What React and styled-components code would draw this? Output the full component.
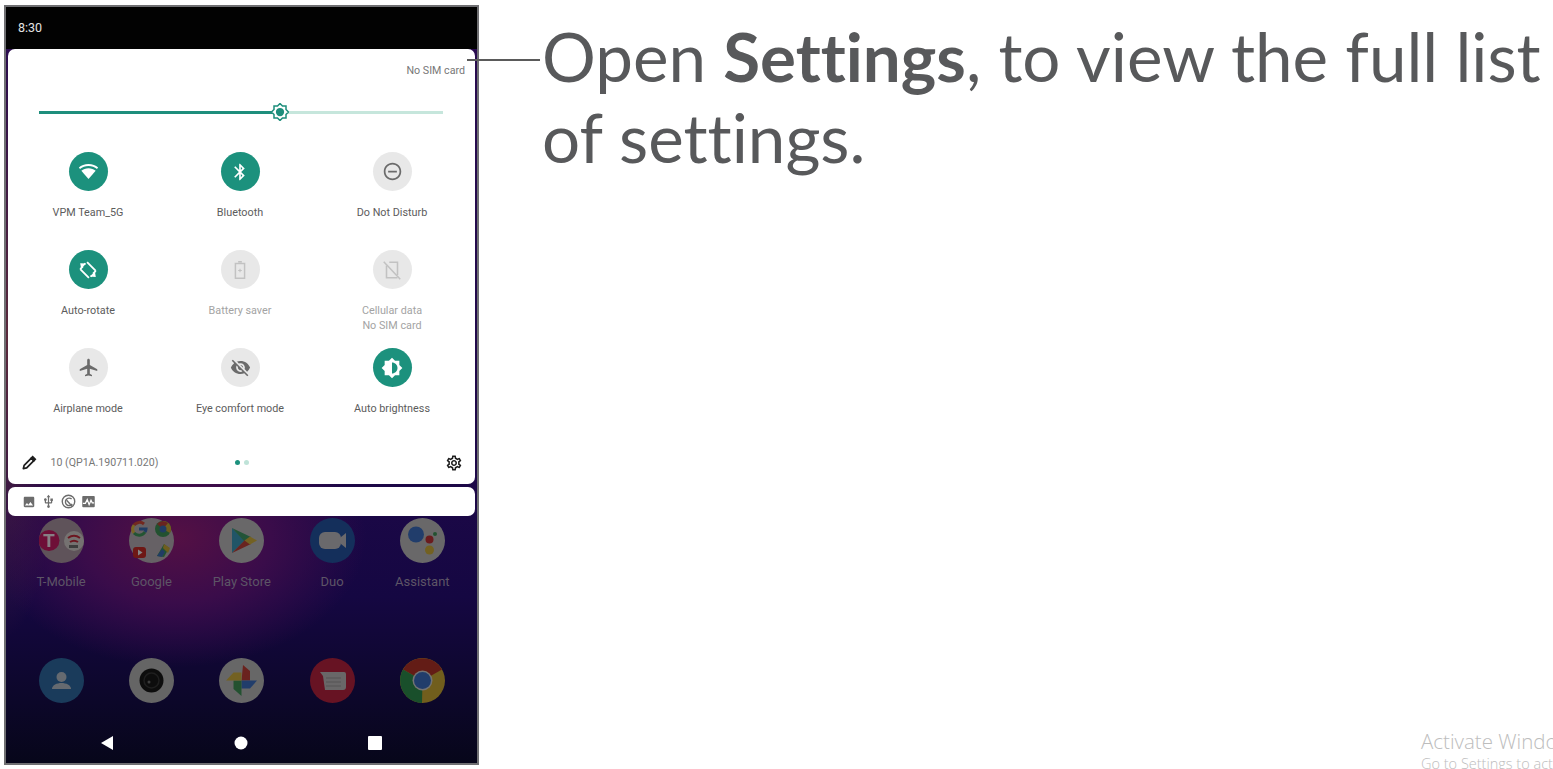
import React from "react"
import styled, { createGlobalStyle } from "styled-components"
import {
  MdBluetooth,
  MdOutlineDoNotDisturbOn,
  MdAirplanemodeActive,
  MdVisibilityOff,
  MdBrightnessMedium,
  MdOutlineSettings,
  MdImage,
  MdUsb,
} from "react-icons/md"

const GlobalStyle = createGlobalStyle`
  html, body {
    margin: 0;
    height: 100%;
    overflow: hidden;
    background: #fff;
  }
  * {
    box-sizing: border-box;
  }
`

const Page = styled.div`
  position: relative;
  width: 1553px;
  height: 769px;
  padding: 5px 0 0 4px;
  display: flex;
  gap: 63px;
  overflow: hidden;
`

const Phone = styled.div`
  width: 475px;
  height: 760px;
  flex: none;
  border: 2px solid #6f6f72;
  display: flex;
  flex-direction: column;
  background:
    radial-gradient(ellipse 190px 130px at 170px 530px, #541044 0%, #3a0c4a 50%, rgba(40, 8, 76, 0) 100%),
    radial-gradient(ellipse 60px 300px at 0 330px, #5c2a3c 0%, rgba(60, 20, 60, 0) 100%),
    linear-gradient(180deg, #2a0b50 0%, #1d0848 62%, #150742 78%, #0c0729 92%, #07061a 100%);
  font-family: Roboto, "Liberation Sans", sans-serif;
`

const StatusBar = styled.div`
  height: 42px;
  flex: none;
  background: #020202;
  color: #e4e4e4;
  font-size: 12.5px;
  padding: 13px 0 0 12px;
`

const Panel = styled.div`
  height: 435px;
  flex: none;
  margin: 0 2px 0 1.5px;
  border-radius: 7px;
  background: #fff;
  display: flex;
  flex-direction: column;
`

const SimText = styled.div`
  height: 44px;
  flex: none;
  padding: 15px 10px 0 0;
  text-align: right;
  font-size: 10.7px;
  color: #777;
`

const BrightnessRow = styled.div`
  position: relative;
  height: 38px;
  flex: none;
  margin: 0 32px 0 31px;
  display: flex;
  align-items: center;
`

const SliderFill = styled.div`
  height: 3px;
  background: ${(p) => (p.$on ? "#1e8e7c" : "#c6e6dc")};
  flex: ${(p) => (p.$on ? "0 0 241px" : "1")};
`

const SliderThumb = styled.svg`
  position: absolute;
  left: 232px;
  top: 10px;
  width: 18px;
  height: 18px;
`

const TileGrid = styled.div`
  margin: 21px 4px 0 4.5px;
  flex: none;
  display: grid;
  grid-template-columns: repeat(3, 152px);
  grid-template-rows: 98px 98px 92px;
`

const Tile = styled.div`
  display: flex;
  flex-direction: column;
  align-items: center;
`

const TileCircle = styled.div`
  width: 39px;
  height: 39px;
  border-radius: 50%;
  display: flex;
  align-items: center;
  justify-content: center;
  background: ${(p) => (p.$state === "on" ? "#1c917d" : "#e8e8e8")};
  color: ${(p) => (p.$state === "on" ? "#fff" : p.$state === "off" ? "#6b6b6b" : "#c2c2c2")};
`

const TileLabel = styled.div`
  margin-top: 13.5px;
  font-size: 10.8px;
  line-height: 15px;
  text-align: center;
  color: ${(p) => (p.$muted ? "#a3a3a3" : "#5c5c5c")};
`

const PanelFooter = styled.div`
  margin-top: auto;
  height: 44px;
  flex: none;
  padding: 1px 12px 0 13px;
  display: flex;
  align-items: center;
  color: #1d1d1d;
`

const BuildText = styled.div`
  margin-left: 14px;
  width: 184px;
  font-size: 10.6px;
  color: #777;
`

const PageDots = styled.div`
  display: flex;
  gap: 4px;
`

const Dot = styled.span`
  width: 5px;
  height: 5px;
  border-radius: 50%;
  background: ${(p) => (p.$active ? "#1c917d" : "#bfe3d8")};
`

const FooterGear = styled.div`
  margin-left: auto;
  display: flex;
  stroke: currentColor;
  stroke-width: 0.6;
`

const NotificationStrip = styled.div`
  height: 29px;
  flex: none;
  margin: 3px 2px 0 1.5px;
  padding: 0 0 0 14px;
  border-radius: 7px;
  background: #fff;
  display: flex;
  align-items: center;
  gap: 5px;
  color: #6c6c6c;
`

const Home = styled.div`
  flex: 1;
  display: flex;
  flex-direction: column;
  align-items: stretch;
`

const AppRow = styled.div`
  margin-top: ${(p) => p.$top}px;
  padding-left: 10px;
  display: grid;
  grid-template-columns: repeat(5, 90.3px);
`

const AppCell = styled.div`
  display: flex;
  flex-direction: column;
  align-items: center;
`

const AppIcon = styled.svg`
  width: 45px;
  height: 45px;
  display: block;
  filter: brightness(0.6) saturate(0.9);
`

const AppLabel = styled.div`
  margin-top: 11px;
  font-size: 13px;
  line-height: 16px;
  color: #5d5566;
`

const NavBar = styled.div`
  margin-top: auto;
  height: 40px;
  padding-left: 94px;
  display: flex;
  align-items: center;
`

const NavButton = styled.svg`
  width: 14px;
  height: 14px;
  margin-right: ${(p) => p.$gap}px;
`

const Connector = styled.div`
  position: absolute;
  left: 467px;
  top: 59px;
  width: 73px;
  height: 2px;
  background: #5a5a5a;
`

const Caption = styled.p`
  margin: 11px 0 0;
  width: 1010px;
  font-family: Lato, "Open Sans", sans-serif;
  font-size: 67.3px;
  line-height: 81px;
  font-variant-ligatures: none;
  color: #58595b;
  b {
    font-weight: 700;
  }
`

const Watermark = styled.div`
  position: absolute;
  left: 1421px;
  top: 730px;
  white-space: nowrap;
  font-family: "Open Sans", "Liberation Sans", sans-serif;
  font-weight: 300;
  color: #bdbdbd;
  font-size: 20.5px;
  line-height: 23px;
  small {
    display: block;
    font-size: 14.5px;
    line-height: 21px;
  }
`

const WifiIcon = () => (
  <svg width="21" height="21" viewBox="0 0 24 24" fill="currentColor">
    <path d="M12 3.500C7.600 3.500 3.600 5 1 7.400l1.300 1.800C5 7 8.300 5.800 12 5.800s7 1.200 9.700 3.400L23 7.400C20.400 5 16.400 3.500 12 3.500z" />
    <path d="M12 8.200c-3.200 0-6 1-8.200 2.800L12 20.500l8.200-9.500c-2.200-1.800-5-2.800-8.200-2.800z" />
  </svg>
)

const RotateIcon = () => (
  <svg width="22" height="22" viewBox="0 0 24 24" fill="none" stroke="currentColor" strokeWidth="2">
    <path d="M9 4.800l-1 1M11 3.500l9.500 9.500M3.500 11L13 20.500M15 19.200l1-1M6.500 8L4 10.500l-.500.500M17.500 16l2.500-2.500.500-.500" />
    <path d="M3.500 4.500l6.500.500-5.500 5.500z" fill="currentColor" stroke="none" />
    <path d="M20.500 19.500l-6.500-.500 5.500-5.500z" fill="currentColor" stroke="none" />
  </svg>
)

const BatteryIcon = () => (
  <svg width="22" height="22" viewBox="0 0 24 24" fill="none" stroke="currentColor" strokeWidth="1.600">
    <path d="M10 3h4M7 5h10v16H7z" />
    <path d="M10 12.500h4M12 10.500v4" strokeWidth="1.200" />
  </svg>
)

const CellularOffIcon = () => (
  <svg width="22" height="22" viewBox="0 0 24 24" fill="none" stroke="currentColor" strokeWidth="1.700">
    <path d="M9 3.500h9v14M18 20.500H6V7" />
    <path d="M3 3l18 19" />
  </svg>
)

const EditIcon = () => (
  <svg width="16" height="16" viewBox="0 0 24 24" fill="none" stroke="currentColor" strokeWidth="2.600">
    <path d="M3.500 20.500l1.200-5L15.500 4.700l3.800 3.800L8.500 19.300z" strokeLinejoin="round" />
    <path d="M15.500 4.700l2-2 3.800 3.800-2 2z" fill="currentColor" />
  </svg>
)

const NetworkIcon = () => (
  <svg width="15" height="15" viewBox="0 0 24 24" fill="none" stroke="currentColor" strokeWidth="2.200">
    <circle cx="12" cy="12" r="10" />
    <path d="M17 8a6 6 0 1 0 1 8" />
    <path d="M9 10l9 10" />
  </svg>
)

const MonitorIcon = () => (
  <svg width="15" height="15" viewBox="0 0 24 24">
    <rect x="2" y="3" width="20" height="18" rx="1.500" fill="currentColor" />
    <path d="M3 15h4l3-6 3 8 3-7 2 4h3" fill="none" stroke="#fff" strokeWidth="2" />
  </svg>
)

const TMobileIcon = () => (
  <AppIcon viewBox="0 0 45 45">
    <circle cx="22.500" cy="22.500" r="22.500" fill="#a08a96" />
    <circle cx="10" cy="22.500" r="10.500" fill="#c4155f" />
    <text x="10" y="29" fontSize="19" fontWeight="700" fill="#e0d4dc" textAnchor="middle" fontFamily="Roboto">T</text>
    <circle cx="35" cy="23" r="10" fill="#c4bebc" />
    <path d="M29 20c4-3 8-3 12 0M31 24c3-2 5-2 8 0" fill="none" stroke="#c02234" strokeWidth="2" />
    <rect x="30" y="27" width="9" height="3" fill="#666" />
  </AppIcon>
)

const GoogleFolderIcon = () => (
  <AppIcon viewBox="0 0 45 45">
    <circle cx="22.500" cy="22.500" r="22.500" fill="#aaa2a8" />
    <path d="M5 7a7 7 0 0 1 10-1" fill="none" stroke="#c8402f" strokeWidth="3" />
    <path d="M5 7a7 7 0 0 0 0 8" fill="none" stroke="#cfa82e" strokeWidth="3" />
    <path d="M5 15a7 7 0 0 0 11-1" fill="none" stroke="#348f50" strokeWidth="3" />
    <path d="M10 11h7a7 7 0 0 1-1 3" fill="none" stroke="#3165ae" strokeWidth="3" />
    <circle cx="34" cy="11" r="8" fill="#348a4d" />
    <path d="M34 3a8 8 0 0 1 7 12l-7-4z" fill="#bc9b26" />
    <path d="M28 6a8 8 0 0 1 11-1l-5 6z" fill="#b93a31" />
    <circle cx="34" cy="11" r="3.500" fill="#3165ae" />
    <rect x="4" y="29" width="13" height="11" rx="3" fill="#c42420" />
    <path d="M9 31.500l4.500 3-4.500 3z" fill="#ddd" />
    <path d="M28 38l7-12 5 4-5 9z" fill="#348a4d" />
    <path d="M35 26l6 4-2 5-5-5z" fill="#bc9b26" />
    <path d="M28 38l5-7 3 3-3 5z" fill="#3165ae" />
  </AppIcon>
)

const PlayIcon = () => (
  <AppIcon viewBox="0 0 45 45">
    <circle cx="22.500" cy="22.500" r="22.500" fill="#b0adaf" />
    <path d="M13 10v25l13-12.500z" fill="#2f8fb0" />
    <path d="M13 10l19 9-6 5z" fill="#348f5a" />
    <path d="M13 35l19-9-6-4z" fill="#b93a31" />
    <path d="M31 18.500l7 4-7 4-5.500-4z" fill="#c3a22d" />
  </AppIcon>
)

const DuoIcon = () => (
  <AppIcon viewBox="0 0 45 45">
    <circle cx="22.500" cy="22.500" r="22.500" fill="#1d4ea0" />
    <rect x="9" y="14" width="22" height="17" rx="6" fill="#b0afb4" />
    <path d="M31 19l5-4v15l-5-4z" fill="#b0afb4" />
  </AppIcon>
)

const AssistantIcon = () => (
  <AppIcon viewBox="0 0 45 45">
    <circle cx="22.500" cy="22.500" r="22.500" fill="#b0adaf" />
    <circle cx="16" cy="16.500" r="8" fill="#3267bc" />
    <circle cx="35" cy="16" r="2" fill="#348a4d" />
    <circle cx="29.500" cy="21.500" r="4" fill="#bc2a2f" />
    <circle cx="29.500" cy="32" r="4.500" fill="#c3a22d" />
  </AppIcon>
)

const ContactsIcon = () => (
  <AppIcon viewBox="0 0 45 45">
    <circle cx="22.500" cy="22.500" r="22.500" fill="#26649f" />
    <circle cx="22.500" cy="19" r="5" fill="#a8b0bc" />
    <path d="M13 31c0-4 5-6 9.500-6s9.500 2 9.500 6z" fill="#a8b0bc" />
  </AppIcon>
)

const CameraIcon = () => (
  <AppIcon viewBox="0 0 45 45">
    <circle cx="22.500" cy="22.500" r="22.500" fill="#a8a8a8" />
    <circle cx="22.500" cy="22.500" r="12" fill="#161616" />
    <circle cx="22.500" cy="22.500" r="7.500" fill="none" stroke="#333" strokeWidth="1.500" />
    <circle cx="20" cy="24" r="1.500" fill="#666" />
  </AppIcon>
)

const PhotosIcon = () => (
  <AppIcon viewBox="0 0 45 45">
    <circle cx="22.500" cy="22.500" r="22.500" fill="#acacac" />
    <path d="M22.500 22.500L24 7l7 6v9.500z" fill="#bc362f" />
    <path d="M22.500 22.500H38l-7 8H22.500z" fill="#3267bc" />
    <path d="M22.500 22.500V38l-8-7V22.500z" fill="#348a4d" />
    <path d="M22.500 22.500H7l7.500-8h8z" fill="#c3a22d" />
  </AppIcon>
)

const MessagesIcon = () => (
  <AppIcon viewBox="0 0 45 45">
    <circle cx="22.500" cy="22.500" r="22.500" fill="#b81c3a" />
    <path d="M10 14h24a2 2 0 0 1 2 2v13a3 3 0 0 1-3 3H15l-2-14z" fill="#b0acae" />
    <path d="M16 20h15M16 24h15M16 28h15" stroke="#8e8a8c" strokeWidth="1.200" />
  </AppIcon>
)

const ChromeIcon = () => (
  <AppIcon viewBox="0 0 45 45">
    <circle cx="22.500" cy="22.500" r="22.500" fill="#c09c24" />
    <path d="M22.500 22.500L3 11.500A22.500 22.500 0 0 1 42 11.500z" fill="#b02c21" />
    <path d="M22.500 22.500L22 45A22.500 22.500 0 0 1 3 11.500z" fill="#228743" />
    <circle cx="22.500" cy="22.500" r="10" fill="#c0c0c0" />
    <circle cx="22.500" cy="22.500" r="8.500" fill="#3267bc" />
  </AppIcon>
)

const tiles = [
  { label: "VPM Team_5G", state: "on", icon: <WifiIcon /> },
  { label: "Bluetooth", state: "on", icon: <MdBluetooth size={20} /> },
  { label: "Do Not Disturb", state: "off", icon: <MdOutlineDoNotDisturbOn size={21} /> },
  { label: "Auto-rotate", state: "on", icon: <RotateIcon /> },
  { label: "Battery saver", state: "disabled", icon: <BatteryIcon /> },
  { label: "Cellular data", sub: "No SIM card", state: "disabled", icon: <CellularOffIcon /> },
  { label: "Airplane mode", state: "off", icon: <MdAirplanemodeActive size={21} /> },
  { label: "Eye comfort mode", state: "off", icon: <MdVisibilityOff size={21} /> },
  { label: "Auto brightness", state: "on", icon: <MdBrightnessMedium size={22} /> },
]

const apps = [
  { label: "T-Mobile", icon: <TMobileIcon /> },
  { label: "Google", icon: <GoogleFolderIcon /> },
  { label: "Play Store", icon: <PlayIcon /> },
  { label: "Duo", icon: <DuoIcon /> },
  { label: "Assistant", icon: <AssistantIcon /> },
]

const dock = [<ContactsIcon />, <CameraIcon />, <PhotosIcon />, <MessagesIcon />, <ChromeIcon />]

const App = () => {
  return (
    <Page>
      <GlobalStyle />
      <Phone>
        <StatusBar>8:30</StatusBar>
        <Panel>
          <SimText>No SIM card</SimText>
          <BrightnessRow>
            <SliderFill $on />
            <SliderFill />
            <SliderThumb viewBox="0 0 24 24">
              <path
                d="M20 15.310L23.310 12 20 8.690V4h-4.690L12 .690 8.690 4H4v4.690L.690 12 4 15.310V20h4.690L12 23.310 15.310 20H20z"
                fill="#fff"
                stroke="#1e8e7c"
                strokeWidth="2"
              />
              <circle cx="12" cy="12" r="5.500" fill="#1e8e7c" />
            </SliderThumb>
          </BrightnessRow>
          <TileGrid>
            {tiles.map((tile) => (
              <Tile key={tile.label}>
                <TileCircle $state={tile.state}>{tile.icon}</TileCircle>
                <TileLabel $muted={tile.state === "disabled"}>
                  {tile.label}
                  {tile.sub && <br />}
                  {tile.sub}
                </TileLabel>
              </Tile>
            ))}
          </TileGrid>
          <PanelFooter>
            <EditIcon />
            <BuildText>10 (QP1A.190711.020)</BuildText>
            <PageDots>
              <Dot $active />
              <Dot />
            </PageDots>
            <FooterGear>
              <MdOutlineSettings size={18} />
            </FooterGear>
          </PanelFooter>
        </Panel>
        <NotificationStrip>
          <MdImage size={14} />
          <MdUsb size={15} />
          <NetworkIcon />
          <MonitorIcon />
        </NotificationStrip>
        <Home>
          <AppRow $top={2}>
            {apps.map((app) => (
              <AppCell key={app.label}>
                {app.icon}
                <AppLabel>{app.label}</AppLabel>
              </AppCell>
            ))}
          </AppRow>
          <AppRow $top={68}>
            {dock.map((icon, i) => (
              <AppCell key={i}>{icon}</AppCell>
            ))}
          </AppRow>
          <NavBar>
            <NavButton viewBox="0 0 14 14" $gap={120}>
              <path d="M13 0v14L1 7z" fill="#fff" />
            </NavButton>
            <NavButton viewBox="0 0 14 14" $gap={120}>
              <circle cx="7" cy="7" r="6.500" fill="#fff" />
            </NavButton>
            <NavButton viewBox="0 0 14 14" $gap={0}>
              <rect x="0" y="0" width="14" height="14" rx="1" fill="#fff" />
            </NavButton>
          </NavBar>
        </Home>
      </Phone>
      <Connector />
      <Caption>
        Open <b>Settings</b>, to view the full list of settings.
      </Caption>
      <Watermark>
        Activate Windows
        <small>Go to Settings to activate Windows.</small>
      </Watermark>
    </Page>
  )
}

export default App
